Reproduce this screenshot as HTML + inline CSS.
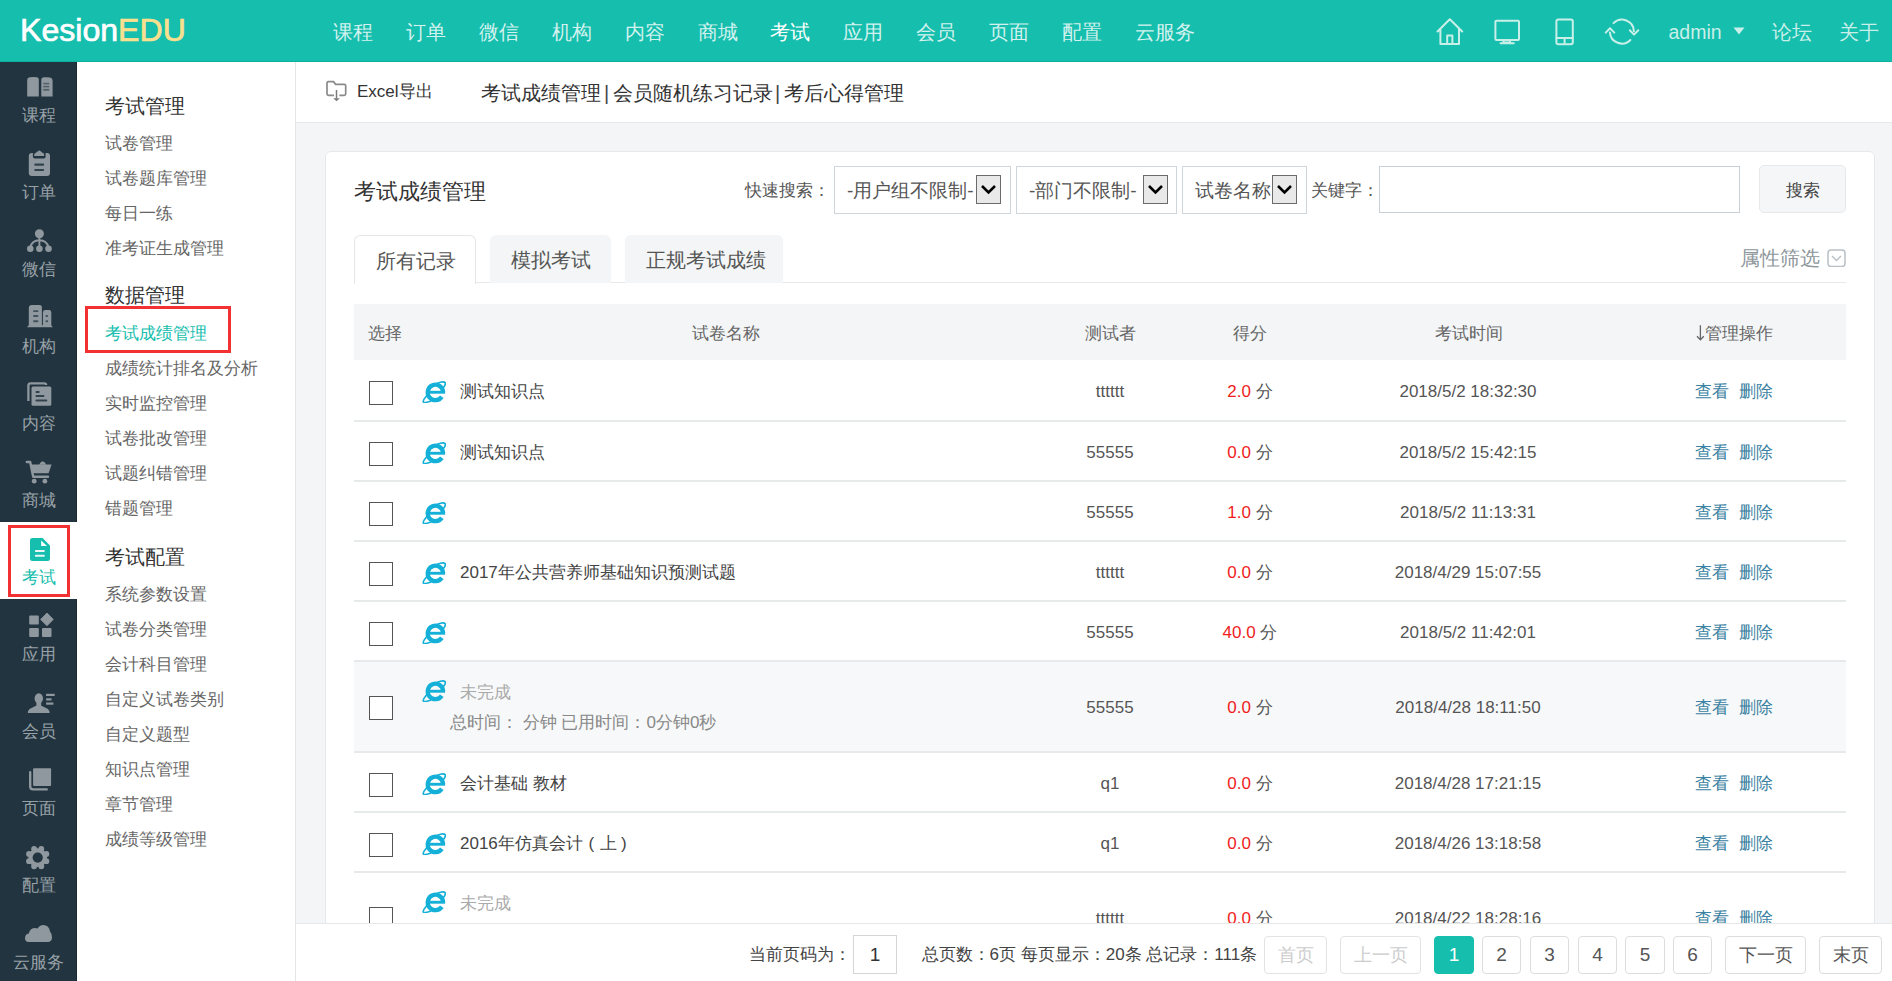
<!DOCTYPE html>
<html><head><meta charset="utf-8"><style>
*{box-sizing:border-box;margin:0;padding:0}
html,body{width:1892px;height:981px;overflow:hidden}
body{font-family:"Liberation Sans",sans-serif;background:#f3f5f6;position:relative;color:#333}
.a{position:absolute;white-space:nowrap}
#hdr{position:absolute;left:0;top:0;width:1892px;height:62px;background:#15bead;border-bottom:1px solid #0fae9e}
#logo{left:20px;top:11.5px;font-size:32.1px;color:#fff;line-height:36px;-webkit-text-stroke:.7px currentColor}
#logo span{color:#f9e08f;-webkit-text-stroke:.7px #f9e08f}
.nav{top:20px;font-size:20px;line-height:24px;color:rgba(255,255,255,.82)}
#s1{position:absolute;left:0;top:62px;width:77px;height:919px;background:#22343f;border-right:1px solid #1a2833}
.lb{position:absolute;left:0;width:77px;text-align:center;font-size:17px;line-height:20px;color:#98a1a7}
#s2{position:absolute;left:77px;top:62px;width:219px;height:919px;background:#fff;border-right:1px solid #e3e6e8}
.h2{left:28px;font-size:20px;line-height:24px;color:#333}
.m{left:28px;font-size:17px;line-height:20px;color:#666}
#tb{position:absolute;left:296px;top:62px;width:1596px;height:61px;background:#fff;border-bottom:1px solid #e6e8ea}
#card{position:absolute;left:325px;top:151px;width:1550px;height:830px;background:#fff;border-radius:6px;border:1px solid #e6e9eb}
#pg{position:absolute;left:296px;top:923px;width:1596px;height:58px;background:#fff;border-top:1px solid #e6e8ea}
.t17{font-size:17px;line-height:20px}
.sel{position:absolute;top:166px;height:48px;border:1px solid #cfd6db;background:#fff}
.sel .tx{position:absolute;top:13px;font-size:19px;line-height:22px;color:#555}
.dd{position:absolute;top:8px;width:25px;height:29px;background:#e9e9e9;border:1px solid #6b6b6b}
.dd svg{position:absolute;left:3px;top:8px}
.tab{position:absolute;top:235px;height:48px;border-radius:6px 6px 0 0}
.tab .tx{position:absolute;top:12.5px;font-size:20px;line-height:24px;color:#555}
.row{position:absolute;left:354px;width:1492px;border-bottom:2px solid #e6eaeb}
.cb{position:absolute;left:15px;width:24px;height:24px;border:1.5px solid #555;background:#fff}
.ie{position:absolute;left:68px}
.nm{position:absolute;left:106px;font-size:17px;line-height:20px;color:#444}
.c{position:absolute;font-size:17px;line-height:20px;color:#555;text-align:center}
.red{color:#f01c1c}
.lk{position:absolute;font-size:17px;line-height:20px;color:#3b82a2}
.pb{position:absolute;top:936px;height:38px;border:1px solid #ddd;border-radius:4px;text-align:center;font-size:19px;line-height:36px;color:#555;background:#fff}
</style></head><body>
<div id="hdr">
<div class="a" id="logo">Kesion<span>EDU</span></div>
<div class="a nav" style="left:333.2px">课程</div>
<div class="a nav" style="left:406.0px">订单</div>
<div class="a nav" style="left:478.9px">微信</div>
<div class="a nav" style="left:551.8px">机构</div>
<div class="a nav" style="left:624.6px">内容</div>
<div class="a nav" style="left:697.5px">商城</div>
<div class="a nav" style="left:770.3px;color:#fff">考试</div>
<div class="a nav" style="left:843.1px">应用</div>
<div class="a nav" style="left:916.0px">会员</div>
<div class="a nav" style="left:988.8px">页面</div>
<div class="a nav" style="left:1061.7px">配置</div>
<div class="a nav" style="left:1134.5px">云服务</div>
</div>
<div id="s1"></div>
<svg class="a" style="left:0;top:0" width="77" height="981" viewBox="0 0 77 981"><rect x="0" y="522" width="77" height="77" fill="#fff"/><path d="M27.2 80Q27.2 77.6 29.8 77.3Q34 76.9 37 77.3Q38.8 77.6 38.8 79.6V96.6H27.2Z" fill="#8f989e"/><path d="M41.3 79.6Q41.3 77.4 43.6 77.3Q47 76.9 50 77.6Q52.6 78.3 52.6 80.6V96.6H41.3Z" fill="#8f989e"/><g fill="#22343f" opacity=".55"><rect x="43.2" y="82.8" width="6" height="1.6"/><rect x="43.2" y="85.8" width="6" height="1.6"/><rect x="43.2" y="88.9" width="6" height="1.8"/></g><rect x="28.8" y="153" width="21.2" height="23" rx="3" fill="#8f989e"/><rect x="32.9" y="149" width="12.7" height="9.4" rx="2" fill="#22343f"/><path d="M34.3 156V154.6Q34.3 153.4 35.6 153.1L38.6 150.8Q39.3 150.2 40 150.8L42.9 153.1Q44.1 153.4 44.1 154.6V156Z" fill="#8f989e"/><g fill="#22343f" opacity=".85"><rect x="34.3" y="163.6" width="9.8" height="2.1" rx=".8"/><rect x="34.3" y="168.9" width="9.8" height="2.1" rx=".8"/></g><circle cx="39.4" cy="233.8" r="4.5" fill="#8f989e"/><circle cx="30.3" cy="248.7" r="3.3" fill="#8f989e"/><circle cx="39.4" cy="248.7" r="3.3" fill="#8f989e"/><circle cx="48.5" cy="248.7" r="3.3" fill="#8f989e"/><path d="M39.4 237V248M30.5 247Q32 240.5 39.4 240.3Q46.8 240.5 48.3 247" fill="none" stroke="#8f989e" stroke-width="1.9"/><path d="M28.8 308Q28.8 304.9 31.8 304.9H39.5Q41.9 304.9 41.9 307.5V327H28.8Z" fill="#8f989e"/><path d="M42.9 312.5Q42.9 310.1 45.3 310.1H49Q51.3 310.1 51.3 312.5V327H42.9Z" fill="#8f989e"/><path d="M27 327.2Q28 325.8 29 325.3H50.5Q52 325.8 52.8 327.2Z" fill="#8f989e"/><g fill="#22343f" opacity=".7"><rect x="33.1" y="310.2" width="5.3" height="1.9" rx=".9"/><rect x="33.1" y="315.1" width="5.3" height="1.9" rx=".9"/><rect x="33.1" y="320.3" width="5.3" height="1.9" rx=".9"/><rect x="45.5" y="315.1" width="2.6" height="1.9" rx=".9"/><rect x="45.5" y="320.3" width="2.6" height="1.9" rx=".9"/></g><path d="M28.4 401V385.6Q28.4 383.3 30.7 383.3H44.3Q46.2 383.3 46.2 385.2" fill="none" stroke="#8f989e" stroke-width="2.3"/><rect x="30" y="385" width="23" height="22.5" fill="#22343f"/><rect x="31.5" y="386.4" width="19.8" height="19.4" rx="1.5" fill="#8f989e"/><g fill="#22343f" opacity=".85"><rect x="35.5" y="391" width="4.2" height="1.9" rx=".9"/><rect x="35.5" y="395.1" width="9" height="1.9" rx=".9"/><rect x="35.5" y="399.4" width="11.8" height="2" rx=".9"/></g><path d="M26.8 462H30.2L33.2 476.8H48" fill="none" stroke="#8f989e" stroke-width="2.4" stroke-linecap="round" stroke-linejoin="round"/><path d="M31 464.6H51.6L48.6 473.2H32.6Z" fill="#8f989e"/><path d="M39 464.8Q42.6 457.6 46.4 464.8Z" fill="#8f989e"/><circle cx="34.2" cy="481.2" r="2.4" fill="#8f989e"/><circle cx="44.9" cy="481.2" r="2.4" fill="#8f989e"/><path d="M32.3 538H42.6L50 545.4V558.7Q50 561 47.7 561H32.3Q30 561 30 558.7V540.3Q30 538 32.3 538Z" fill="#15bead"/><path d="M41.2 540.4V546H47Z" fill="#fff"/><g fill="#fff" opacity=".9"><rect x="34.8" y="549.9" width="10.1" height="2.1" rx="1"/><rect x="34.8" y="554.7" width="10.1" height="2.1" rx="1"/></g><rect x="29.2" y="615.5" width="9.6" height="9" rx="1" fill="#8f989e"/><rect x="29.2" y="628" width="9.6" height="8.9" rx="1" fill="#8f989e"/><rect x="42" y="628" width="9.5" height="8.9" rx="1" fill="#8f989e"/><path d="M47 613L53.3 619.4L47 625.8L40.6 619.4Z" fill="#8f989e" stroke="#8f989e" stroke-width=".8" stroke-linejoin="round"/><ellipse cx="38.8" cy="698.4" rx="4.2" ry="5.2" fill="#8f989e"/><rect x="36.4" y="701" width="4.8" height="5.5" fill="#8f989e"/><path d="M27.8 713Q27.8 709.8 31 708.3L36 705.8H41.5L46.5 708.3Q49.7 709.8 49.7 713Z" fill="#8f989e"/><g fill="#8f989e"><rect x="46.1" y="693.8" width="8.6" height="2.2"/><rect x="46.1" y="698.3" width="5.4" height="2.2"/><rect x="46.1" y="702.5" width="7.3" height="2.2"/></g><rect x="33.1" y="768.2" width="18" height="17.7" rx="1" fill="#8f989e"/><path d="M30.2 772.3V786.5Q30.2 789.4 33 789.4H46.7" fill="none" stroke="#8f989e" stroke-width="2.4" stroke-linecap="round"/><circle cx="37.7" cy="857.6" r="9.3" fill="#8f989e"/><circle cx="46.38" cy="861.20" r="2.9" fill="#8f989e"/><circle cx="41.30" cy="866.28" r="2.9" fill="#8f989e"/><circle cx="34.10" cy="866.28" r="2.9" fill="#8f989e"/><circle cx="29.02" cy="861.20" r="2.9" fill="#8f989e"/><circle cx="29.02" cy="854.00" r="2.9" fill="#8f989e"/><circle cx="34.10" cy="848.92" r="2.9" fill="#8f989e"/><circle cx="41.30" cy="848.92" r="2.9" fill="#8f989e"/><circle cx="46.38" cy="854.00" r="2.9" fill="#8f989e"/><circle cx="37.7" cy="857.6" r="5.1" fill="#22343f"/><path d="M28.6 942Q25 942 25 938Q25 934.2 28.8 933.4Q30 928.4 34.4 928Q36.2 927.9 37.6 928.6Q39.6 924.9 43.2 924.9Q49.2 925 50 931.6Q52 933.6 52 937.6Q52 942 47.6 942Z" fill="#8f989e"/></svg>
<div class="a" style="left:8px;top:525px;width:62px;height:72px;border:3px solid #f23232"></div>
<div class="lb" style="top:106px">课程</div>
<div class="lb" style="top:183px">订单</div>
<div class="lb" style="top:260px">微信</div>
<div class="lb" style="top:337px">机构</div>
<div class="lb" style="top:414px">内容</div>
<div class="lb" style="top:491px">商城</div>
<div class="lb" style="top:568px;color:#15bead">考试</div>
<div class="lb" style="top:645px">应用</div>
<div class="lb" style="top:722px">会员</div>
<div class="lb" style="top:799px">页面</div>
<div class="lb" style="top:876px">配置</div>
<div class="lb" style="top:953px">云服务</div>
<div id="s2">
<div class="a h2" style="top:31.5px">考试管理</div>
<div class="a m" style="top:71.8px">试卷管理</div>
<div class="a m" style="top:106.8px">试卷题库管理</div>
<div class="a m" style="top:141.8px">每日一练</div>
<div class="a m" style="top:176.8px">准考证生成管理</div>
<div class="a h2" style="top:221px">数据管理</div>
<div class="a m" style="top:261.8px;color:#15bead">考试成绩管理</div>
<div class="a m" style="top:296.8px">成绩统计排名及分析</div>
<div class="a m" style="top:331.8px">实时监控管理</div>
<div class="a m" style="top:366.8px">试卷批改管理</div>
<div class="a m" style="top:401.8px">试题纠错管理</div>
<div class="a m" style="top:436.8px">错题管理</div>
<div class="a h2" style="top:482.5px">考试配置</div>
<div class="a m" style="top:522.8px">系统参数设置</div>
<div class="a m" style="top:557.8px">试卷分类管理</div>
<div class="a m" style="top:592.8px">会计科目管理</div>
<div class="a m" style="top:627.8px">自定义试卷类别</div>
<div class="a m" style="top:662.8px">自定义题型</div>
<div class="a m" style="top:697.8px">知识点管理</div>
<div class="a m" style="top:732.8px">章节管理</div>
<div class="a m" style="top:767.8px">成绩等级管理</div>
<div class="a" style="left:8px;top:244px;width:146px;height:47px;border:3px solid #f23232"></div>
</div>
<div id="tb"></div>
<svg class="a" style="left:325px;top:80px" width="24" height="23" viewBox="0 0 24 23"><path d="M9 15.3H3.5Q2 15.3 2 13.8V3Q2 1.7 3.3 1.7H8.5L10.6 4.3H19.3Q20.7 4.3 20.7 5.7V13.8Q20.7 15.3 19.2 15.3H14.3" fill="none" stroke="#8a8a8a" stroke-width="1.7"/><path d="M11.5 10V18.5" stroke="#7a7a7a" stroke-width="1.5"/><path d="M8.2 18.2H14.8L11.5 21.2Z" fill="#7a7a7a"/></svg>
<div class="a t17" style="left:357px;top:82px;color:#333">Excel导出</div>
<div class="a" style="left:480.5px;top:81px;font-size:20px;line-height:24px;color:#333">考试成绩管理</div>
<div class="a" style="left:604px;top:80.5px;font-size:20px;line-height:24px;color:#444">|</div>
<div class="a" style="left:612.5px;top:81px;font-size:20px;line-height:24px;color:#333">会员随机练习记录</div>
<div class="a" style="left:775px;top:80.5px;font-size:20px;line-height:24px;color:#444">|</div>
<div class="a" style="left:784px;top:81px;font-size:20px;line-height:24px;color:#333">考后心得管理</div>
<div id="card"></div>
<div class="a" style="left:354px;top:178.5px;font-size:22px;line-height:26px;color:#333">考试成绩管理</div>
<div class="a t17" style="left:745px;top:181px;color:#555">快速搜索：</div>
<div class="sel" style="left:834px;width:177px"><div class="tx" style="left:12px">-用户组不限制-</div><div class="dd" style="left:141px"><svg width="17" height="11" viewBox="0 0 17 11"><path d="M2 2L8.5 8.5L15 2" fill="none" stroke="#000" stroke-width="2.6"/></svg></div></div>
<div class="sel" style="left:1016px;width:161px"><div class="tx" style="left:12px">-部门不限制-</div><div class="dd" style="left:126px"><svg width="17" height="11" viewBox="0 0 17 11"><path d="M2 2L8.5 8.5L15 2" fill="none" stroke="#000" stroke-width="2.6"/></svg></div></div>
<div class="sel" style="left:1182px;width:125px"><div class="tx" style="left:12px">试卷名称</div><div class="dd" style="left:89px"><svg width="17" height="11" viewBox="0 0 17 11"><path d="M2 2L8.5 8.5L15 2" fill="none" stroke="#000" stroke-width="2.6"/></svg></div></div>
<div class="a t17" style="left:1311px;top:181px;color:#555">关键字：</div>
<div class="a" style="left:1379px;top:166px;width:361px;height:47px;border:1px solid #c9d0d5;background:#fff"></div>
<div class="a" style="left:1759px;top:165px;width:87px;height:48px;border:1px solid #e6e9eb;border-radius:5px;background:#f4f6f7"></div>
<div class="a t17" style="left:1786px;top:181px;color:#444">搜索</div>
<div class="a" style="left:354px;top:282px;width:1492px;height:1px;background:#e6e9eb"></div>
<div class="tab" style="left:354px;width:122px;background:#fff;border:1px solid #e3e7e9;border-bottom:none;height:49px"><div class="tx" style="left:21px">所有记录</div></div>
<div class="tab" style="left:490px;width:121px;background:#f3f5f6"><div class="tx" style="left:21px">模拟考试</div></div>
<div class="tab" style="left:625px;width:158px;background:#f3f5f6"><div class="tx" style="left:20.5px">正规考试成绩</div></div>
<div class="a" style="left:1740px;top:245.5px;font-size:20px;line-height:24px;color:#8e979c">属性筛选</div>
<svg class="a" style="left:1827px;top:249px" width="19" height="18" viewBox="0 0 19 18"><rect x="1" y="1" width="17" height="16.5" rx="3" fill="none" stroke="#b8c0c5" stroke-width="1.5"/><path d="M5 7L9.5 11.5L14 7" fill="none" stroke="#b8c0c5" stroke-width="1.4"/></svg>
<div class="a" style="left:354px;top:304px;width:1492px;height:56px;background:#f3f5f6"></div>
<div class="a t17" style="left:368px;top:324px;color:#666">选择</div>
<div class="a t17" style="left:691.5px;top:324px;color:#666">试卷名称</div>
<div class="a t17" style="left:1084.5px;top:324px;color:#666">测试者</div>
<div class="a t17" style="left:1233px;top:324px;color:#666">得分</div>
<div class="a t17" style="left:1434.5px;top:324px;color:#666">考试时间</div>
<div class="a t17" style="left:1704.5px;top:324px;color:#666">管理操作</div>
<svg class="a" style="left:1690px;top:320px" width="20" height="25" viewBox="1690 320 20 25"><path d="M1700.4 325.2V339.6M1697 336.2L1700.4 339.8L1703.8 336.2" fill="none" stroke="#666" stroke-width="1.3"/></svg>
<div class="row" style="top:360px;height:62px;background:#fff">
<div class="cb" style="top:21.0px"></div>
<div class="ie" style="top:20.5px"><svg width="24" height="22" viewBox="0 0 24 22"><g fill="none" stroke="#14b0d8"><path d="M19.83 15.70 A7.7 7.7 0 1 1 21.10 10.80" stroke-width="4.3"/><path d="M15.3 2.4Q21.3 -0.2 23.1 1.7Q24.1 3.3 21.2 6.8" stroke-width="1.7" stroke-linecap="round"/><path d="M5.2 14.2Q0.6 19.4 1.3 21Q2.3 22.3 8.5 20.2" stroke-width="1.7" stroke-linecap="round"/></g><rect x="6.5" y="9.8" width="16.6" height="2.9" fill="#14b0d8"/></svg></div>
<div class="nm" style="top:21.5px">测试知识点</div>
<div class="c" style="left:706px;width:100px;top:21.5px">tttttt</div>
<div class="c" style="left:846px;width:100px;top:21.5px"><span class="red">2.0</span> 分</div>
<div class="c" style="left:1014px;width:200px;top:21.5px">2018/5/2 18:32:30</div>
<div class="lk" style="left:1341px;top:21.5px">查看</div><div class="lk" style="left:1384.5px;top:21.5px">删除</div>
</div>
<div class="row" style="top:422px;height:60px;background:#fff">
<div class="cb" style="top:20.0px"></div>
<div class="ie" style="top:19.5px"><svg width="24" height="22" viewBox="0 0 24 22"><g fill="none" stroke="#14b0d8"><path d="M19.83 15.70 A7.7 7.7 0 1 1 21.10 10.80" stroke-width="4.3"/><path d="M15.3 2.4Q21.3 -0.2 23.1 1.7Q24.1 3.3 21.2 6.8" stroke-width="1.7" stroke-linecap="round"/><path d="M5.2 14.2Q0.6 19.4 1.3 21Q2.3 22.3 8.5 20.2" stroke-width="1.7" stroke-linecap="round"/></g><rect x="6.5" y="9.8" width="16.6" height="2.9" fill="#14b0d8"/></svg></div>
<div class="nm" style="top:20.5px">测试知识点</div>
<div class="c" style="left:706px;width:100px;top:20.5px">55555</div>
<div class="c" style="left:846px;width:100px;top:20.5px"><span class="red">0.0</span> 分</div>
<div class="c" style="left:1014px;width:200px;top:20.5px">2018/5/2 15:42:15</div>
<div class="lk" style="left:1341px;top:20.5px">查看</div><div class="lk" style="left:1384.5px;top:20.5px">删除</div>
</div>
<div class="row" style="top:482px;height:60px;background:#fff">
<div class="cb" style="top:20.0px"></div>
<div class="ie" style="top:19.5px"><svg width="24" height="22" viewBox="0 0 24 22"><g fill="none" stroke="#14b0d8"><path d="M19.83 15.70 A7.7 7.7 0 1 1 21.10 10.80" stroke-width="4.3"/><path d="M15.3 2.4Q21.3 -0.2 23.1 1.7Q24.1 3.3 21.2 6.8" stroke-width="1.7" stroke-linecap="round"/><path d="M5.2 14.2Q0.6 19.4 1.3 21Q2.3 22.3 8.5 20.2" stroke-width="1.7" stroke-linecap="round"/></g><rect x="6.5" y="9.8" width="16.6" height="2.9" fill="#14b0d8"/></svg></div>
<div class="c" style="left:706px;width:100px;top:20.5px">55555</div>
<div class="c" style="left:846px;width:100px;top:20.5px"><span class="red">1.0</span> 分</div>
<div class="c" style="left:1014px;width:200px;top:20.5px">2018/5/2 11:13:31</div>
<div class="lk" style="left:1341px;top:20.5px">查看</div><div class="lk" style="left:1384.5px;top:20.5px">删除</div>
</div>
<div class="row" style="top:542px;height:60px;background:#fff">
<div class="cb" style="top:20.0px"></div>
<div class="ie" style="top:19.5px"><svg width="24" height="22" viewBox="0 0 24 22"><g fill="none" stroke="#14b0d8"><path d="M19.83 15.70 A7.7 7.7 0 1 1 21.10 10.80" stroke-width="4.3"/><path d="M15.3 2.4Q21.3 -0.2 23.1 1.7Q24.1 3.3 21.2 6.8" stroke-width="1.7" stroke-linecap="round"/><path d="M5.2 14.2Q0.6 19.4 1.3 21Q2.3 22.3 8.5 20.2" stroke-width="1.7" stroke-linecap="round"/></g><rect x="6.5" y="9.8" width="16.6" height="2.9" fill="#14b0d8"/></svg></div>
<div class="nm" style="top:20.5px">2017年公共营养师基础知识预测试题</div>
<div class="c" style="left:706px;width:100px;top:20.5px">tttttt</div>
<div class="c" style="left:846px;width:100px;top:20.5px"><span class="red">0.0</span> 分</div>
<div class="c" style="left:1014px;width:200px;top:20.5px">2018/4/29 15:07:55</div>
<div class="lk" style="left:1341px;top:20.5px">查看</div><div class="lk" style="left:1384.5px;top:20.5px">删除</div>
</div>
<div class="row" style="top:602px;height:60px;background:#fff">
<div class="cb" style="top:20.0px"></div>
<div class="ie" style="top:19.5px"><svg width="24" height="22" viewBox="0 0 24 22"><g fill="none" stroke="#14b0d8"><path d="M19.83 15.70 A7.7 7.7 0 1 1 21.10 10.80" stroke-width="4.3"/><path d="M15.3 2.4Q21.3 -0.2 23.1 1.7Q24.1 3.3 21.2 6.8" stroke-width="1.7" stroke-linecap="round"/><path d="M5.2 14.2Q0.6 19.4 1.3 21Q2.3 22.3 8.5 20.2" stroke-width="1.7" stroke-linecap="round"/></g><rect x="6.5" y="9.8" width="16.6" height="2.9" fill="#14b0d8"/></svg></div>
<div class="c" style="left:706px;width:100px;top:20.5px">55555</div>
<div class="c" style="left:846px;width:100px;top:20.5px"><span class="red">40.0</span> 分</div>
<div class="c" style="left:1014px;width:200px;top:20.5px">2018/5/2 11:42:01</div>
<div class="lk" style="left:1341px;top:20.5px">查看</div><div class="lk" style="left:1384.5px;top:20.5px">删除</div>
</div>
<div class="row" style="top:662px;height:91px;background:#f7f8f9">
<div class="cb" style="top:34.0px"></div>
<div class="ie" style="top:18.0px"><svg width="24" height="22" viewBox="0 0 24 22"><g fill="none" stroke="#14b0d8"><path d="M19.83 15.70 A7.7 7.7 0 1 1 21.10 10.80" stroke-width="4.3"/><path d="M15.3 2.4Q21.3 -0.2 23.1 1.7Q24.1 3.3 21.2 6.8" stroke-width="1.7" stroke-linecap="round"/><path d="M5.2 14.2Q0.6 19.4 1.3 21Q2.3 22.3 8.5 20.2" stroke-width="1.7" stroke-linecap="round"/></g><rect x="6.5" y="9.8" width="16.6" height="2.9" fill="#14b0d8"/></svg></div>
<div class="nm" style="top:21.0px;color:#aaa">未完成</div>
<div class="nm" style="left:96px;top:51.0px;color:#888">总时间： 分钟 已用时间：0分钟0秒</div>
<div class="c" style="left:706px;width:100px;top:36.0px">55555</div>
<div class="c" style="left:846px;width:100px;top:36.0px"><span class="red">0.0</span> 分</div>
<div class="c" style="left:1014px;width:200px;top:36.0px">2018/4/28 18:11:50</div>
<div class="lk" style="left:1341px;top:36.0px">查看</div><div class="lk" style="left:1384.5px;top:36.0px">删除</div>
</div>
<div class="row" style="top:753px;height:60px;background:#fff">
<div class="cb" style="top:20.0px"></div>
<div class="ie" style="top:19.5px"><svg width="24" height="22" viewBox="0 0 24 22"><g fill="none" stroke="#14b0d8"><path d="M19.83 15.70 A7.7 7.7 0 1 1 21.10 10.80" stroke-width="4.3"/><path d="M15.3 2.4Q21.3 -0.2 23.1 1.7Q24.1 3.3 21.2 6.8" stroke-width="1.7" stroke-linecap="round"/><path d="M5.2 14.2Q0.6 19.4 1.3 21Q2.3 22.3 8.5 20.2" stroke-width="1.7" stroke-linecap="round"/></g><rect x="6.5" y="9.8" width="16.6" height="2.9" fill="#14b0d8"/></svg></div>
<div class="nm" style="top:20.5px">会计基础 教材</div>
<div class="c" style="left:706px;width:100px;top:20.5px">q1</div>
<div class="c" style="left:846px;width:100px;top:20.5px"><span class="red">0.0</span> 分</div>
<div class="c" style="left:1014px;width:200px;top:20.5px">2018/4/28 17:21:15</div>
<div class="lk" style="left:1341px;top:20.5px">查看</div><div class="lk" style="left:1384.5px;top:20.5px">删除</div>
</div>
<div class="row" style="top:813px;height:60px;background:#fff">
<div class="cb" style="top:20.0px"></div>
<div class="ie" style="top:19.5px"><svg width="24" height="22" viewBox="0 0 24 22"><g fill="none" stroke="#14b0d8"><path d="M19.83 15.70 A7.7 7.7 0 1 1 21.10 10.80" stroke-width="4.3"/><path d="M15.3 2.4Q21.3 -0.2 23.1 1.7Q24.1 3.3 21.2 6.8" stroke-width="1.7" stroke-linecap="round"/><path d="M5.2 14.2Q0.6 19.4 1.3 21Q2.3 22.3 8.5 20.2" stroke-width="1.7" stroke-linecap="round"/></g><rect x="6.5" y="9.8" width="16.6" height="2.9" fill="#14b0d8"/></svg></div>
<div class="nm" style="top:20.5px">2016年仿真会计<span style="display:inline-block;width:17px;text-align:center;margin-left:0px">(</span>上<span style="display:inline-block;width:14px;text-align:center">)</span></div>
<div class="c" style="left:706px;width:100px;top:20.5px">q1</div>
<div class="c" style="left:846px;width:100px;top:20.5px"><span class="red">0.0</span> 分</div>
<div class="c" style="left:1014px;width:200px;top:20.5px">2018/4/26 13:18:58</div>
<div class="lk" style="left:1341px;top:20.5px">查看</div><div class="lk" style="left:1384.5px;top:20.5px">删除</div>
</div>
<div class="row" style="top:873px;height:90px;background:#fff">
<div class="cb" style="top:33.5px"></div>
<div class="ie" style="top:18.0px"><svg width="24" height="22" viewBox="0 0 24 22"><g fill="none" stroke="#14b0d8"><path d="M19.83 15.70 A7.7 7.7 0 1 1 21.10 10.80" stroke-width="4.3"/><path d="M15.3 2.4Q21.3 -0.2 23.1 1.7Q24.1 3.3 21.2 6.8" stroke-width="1.7" stroke-linecap="round"/><path d="M5.2 14.2Q0.6 19.4 1.3 21Q2.3 22.3 8.5 20.2" stroke-width="1.7" stroke-linecap="round"/></g><rect x="6.5" y="9.8" width="16.6" height="2.9" fill="#14b0d8"/></svg></div>
<div class="nm" style="top:21.0px;color:#aaa">未完成</div>
<div class="nm" style="left:96px;top:51.0px;color:#888">总时间： 分钟 已用时间：0分钟0秒</div>
<div class="c" style="left:706px;width:100px;top:36.0px">tttttt</div>
<div class="c" style="left:846px;width:100px;top:36.0px"><span class="red">0.0</span> 分</div>
<div class="c" style="left:1014px;width:200px;top:36.0px">2018/4/22 18:28:16</div>
<div class="lk" style="left:1341px;top:36.0px">查看</div><div class="lk" style="left:1384.5px;top:36.0px">删除</div>
</div>
<div id="pg"></div>
<div class="a t17" style="left:748.5px;top:945px;color:#444">当前页码为：</div>
<div class="a" style="left:853px;top:935px;width:44px;height:39px;border:1px solid #d5d5d5;background:#fff;text-align:center;font-size:19px;line-height:37px;color:#333">1</div>
<div class="a t17" style="left:921.5px;top:945px;color:#444">总页数：6页 每页显示：20条 总记录：111条</div>
<div class="pb" style="left:1264px;width:63px;color:#ccc;border-color:#e3e3e3;font-size:17.5px">首页</div>
<div class="pb" style="left:1340px;width:81px;color:#ccc;border-color:#e3e3e3;font-size:17.5px">上一页</div>
<div class="pb" style="left:1434px;width:40px;background:#15bead;border-color:#15bead;color:#fff">1</div>
<div class="pb" style="left:1482px;width:39px">2</div>
<div class="pb" style="left:1530px;width:39px">3</div>
<div class="pb" style="left:1578px;width:39px">4</div>
<div class="pb" style="left:1625px;width:40px">5</div>
<div class="pb" style="left:1673px;width:39px">6</div>
<div class="pb" style="left:1725px;width:81px;font-size:17.5px">下一页</div>
<div class="pb" style="left:1819px;width:63px;font-size:17.5px">末页</div>
<svg class="a" style="left:1430px;top:12px" width="220" height="40" viewBox="1430 12 220 40"><g fill="none" stroke="#c9efe9" stroke-width="2" stroke-linejoin="round" stroke-linecap="round"><path d="M1437.5 31.5L1449.8 19.2L1462.2 31.5M1440.4 29V44H1459V29M1447.2 44V35.5H1452.4V44"/><rect x="1495.4" y="20.8" width="23.6" height="19.2" rx="1"/><path d="M1503.5 40V42.6H1510V40M1500.5 43.2H1513.8"/><rect x="1556.4" y="19.5" width="16.4" height="24.8" rx="2"/><path d="M1556.4 37.9H1572.8M1564.6 38V44"/><path d="M1613.5 23.1A12 12 0 0 1 1633.9 31.2M1630.4 40A12 12 0 0 1 1609.9 32.4"/><path d="M1629.8 30.3L1634 34.6L1638.3 30.3M1605.7 32.6L1610 28.3L1614.3 32.6"/></g></svg>
<div class="a" style="left:1668.5px;top:20px;font-size:19.5px;line-height:24px;color:#c9efe9">admin</div>
<svg class="a" style="left:1733px;top:27px" width="12" height="8" viewBox="0 0 12 8"><path d="M0.5 0.5H11.5L6 7.5Z" fill="#c9efe9"/></svg>
<div class="a nav" style="left:1771.5px;color:#c9efe9">论坛</div>
<div class="a nav" style="left:1838.5px;color:#c9efe9">关于</div>
</body></html>
